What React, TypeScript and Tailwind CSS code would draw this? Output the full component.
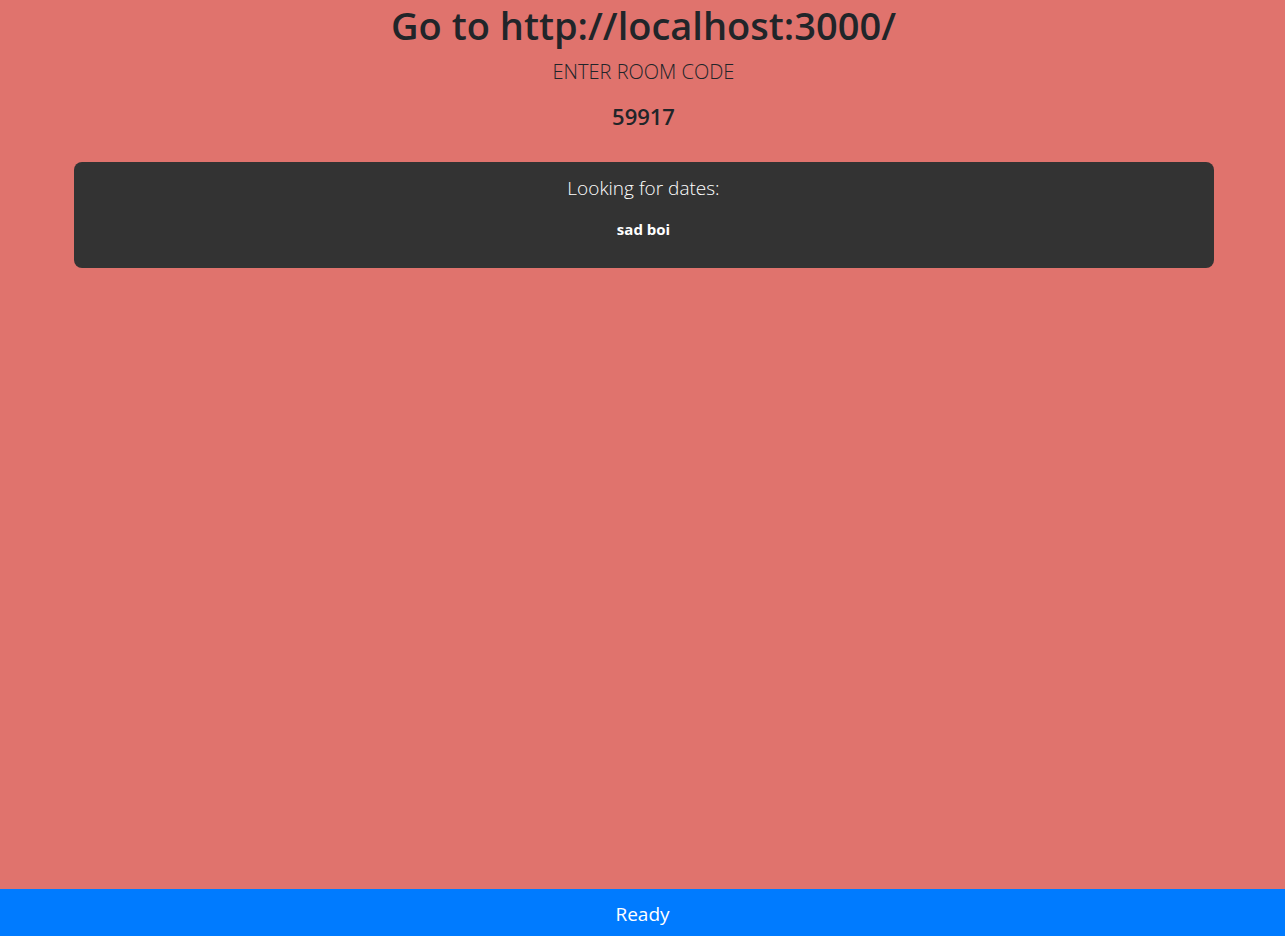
import React from "react";

export default function App() {
  return (
    <div
      className="flex h-[936px] w-full flex-col bg-[#e0736d] text-[#212529]"
      style={{ fontFamily: '"Segoe UI", "Open Sans", "Noto Sans", sans-serif' }}
    >
      <div className="flex-1 pt-[2px]">
        <div className="mx-auto flex w-[1140px] translate-x-[1px] flex-col items-center text-center">
          <h1 className="mb-[8px] text-[38px] font-semibold leading-[47px]">Go to http://localhost:3000/</h1>
          <p className="mb-[15px] text-[20px] font-light leading-[30px]">ENTER ROOM CODE</p>
          <h4 className="mb-2 text-[22px] font-semibold leading-[29px]">59917</h4>
          <div className="mt-[23px] flex h-[106px] w-full flex-col items-center rounded-lg bg-[#333333] pt-[12px] text-white">
            <p className="text-[19px] font-light leading-[28px]">Looking for dates:</p>
            <p className="mt-[17px] text-[15px] font-bold leading-[20px]">sad boi</p>
          </div>
        </div>
      </div>
      <div className="flex h-[47px] items-center justify-center bg-[#007bff] pt-[3px] text-[19px] text-white">
        Ready
      </div>
    </div>
  );
}
